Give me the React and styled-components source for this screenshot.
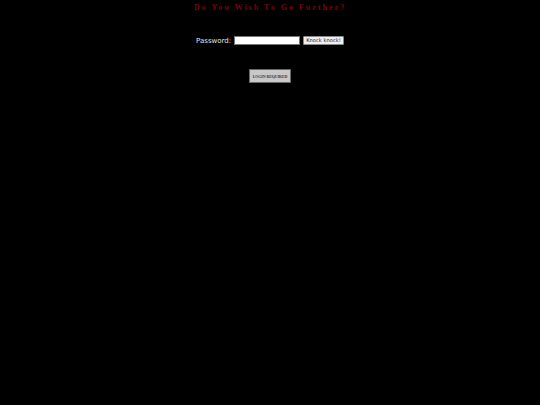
import React from 'react';
import styled, { createGlobalStyle } from 'styled-components';

const GlobalStyle = createGlobalStyle`
  html, body {
    margin: 0;
    padding: 0;
    background: #000;
    height: 100%;
  }
  #root {
    min-height: 100%;
  }
`;

const Page = styled.div`
  width: 540px;
  height: 405px;
  background: #000;
  display: flex;
  flex-direction: column;
  align-items: center;
`;

const Title = styled.h1`
  margin: 3px 0 0 0;
  font-family: 'Liberation Serif', serif;
  font-size: 8px;
  font-weight: bold;
  line-height: 9px;
  letter-spacing: 2px;
  color: #7d0000;
`;

const Form = styled.form`
  margin-top: 24px;
  display: flex;
  align-items: center;
  gap: 3px;
`;

const Label = styled.label`
  font-family: 'DejaVu Sans', sans-serif;
  font-size: 7px;
  color: #e6e6e6;
`;

const Input = styled.input`
  width: 66px;
  height: 9px;
  box-sizing: border-box;
  border: 1px solid #767676;
  background: #fff;
  padding: 0;
  outline: none;
`;

const Knock = styled.button`
  height: 9px;
  box-sizing: border-box;
  padding: 0 2px;
  border: 1px solid #888;
  border-radius: 1px;
  background: #efefef;
  font-family: 'DejaVu Sans', sans-serif;
  font-size: 5.2px;
  line-height: 7px;
  color: #222;
`;

const Required = styled.button`
  margin-top: 24px;
  width: 42px;
  height: 14px;
  box-sizing: border-box;
  border: 1px solid #666;
  background: #c8c8c8;
  padding: 0;
  font-family: 'Liberation Serif', serif;
  font-weight: bold;
  font-size: 4px;
  letter-spacing: -0.1px;
  color: #3a3a3a;
  white-space: nowrap;
`;

export default function App() {
  return (
    <>
      <GlobalStyle />
      <Page>
        <Title>Do You Wish To Go Further?</Title>
        <Form onSubmit={(e) => e.preventDefault()}>
          <Label htmlFor="pw">Password:</Label>
          <Input id="pw" type="password" />
          <Knock type="submit">Knock knock!</Knock>
        </Form>
        <Required type="button">LOGIN REQUIRED</Required>
      </Page>
    </>
  );
}
